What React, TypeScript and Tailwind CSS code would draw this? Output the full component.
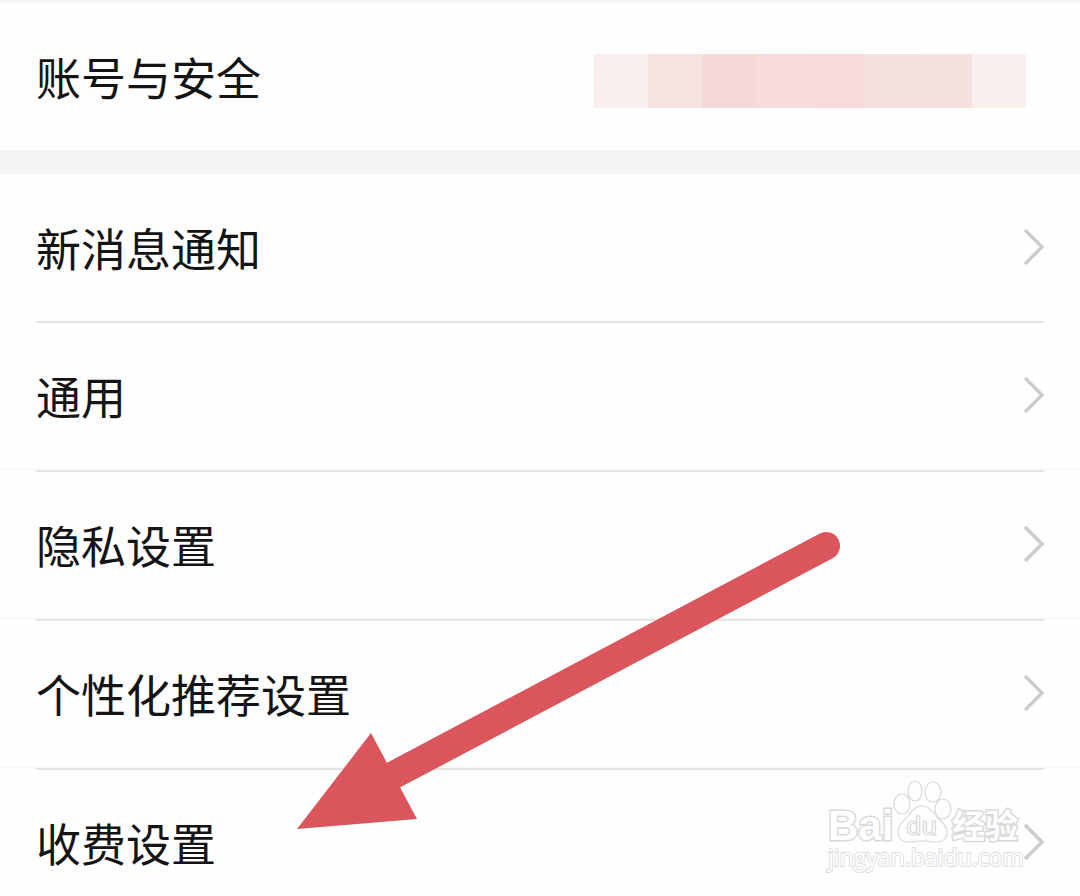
interface SettingItem {
  id: string
  label: string
}

const items: SettingItem[] = [
  { id: 'notify', label: '新消息通知' },
  { id: 'general', label: '通用' },
  { id: 'privacy', label: '隐私设置' },
  { id: 'recommend', label: '个性化推荐设置' },
  { id: 'billing', label: '收费设置' },
]

const maskCells = [
  'bg-[#faeeee]',
  'bg-[#f6e2e1]',
  'bg-[#f4d9d7]',
  'bg-[#f8dcdd]',
  'bg-[#f7dbdc]',
  'bg-[#f4e0df]',
  'bg-[#f5e1e0]',
  'bg-[#f9efec]',
]

function Chevron() {
  return (
    <svg className="h-10 w-[22px] shrink-0" viewBox="0 0 22 40" fill="none" aria-hidden="true">
      <path d="M3 2 L20 19 L3 36" stroke="#cccccc" strokeWidth="3.5" />
    </svg>
  )
}

function Arrow() {
  return (
    <svg
      className="pointer-events-none absolute top-[530px] left-[296px] h-[300px] w-[546px]"
      viewBox="296 530 546 300"
      aria-hidden="true"
    >
      <path d="M826 546 L390 777" stroke="#da565c" strokeWidth="28" strokeLinecap="round" />
      <path d="M297 829 L371 733 L417 819 Z" fill="#da565c" />
    </svg>
  )
}

function Watermark() {
  return (
    <svg
      className="pointer-events-none absolute top-[776px] right-[54px] h-[100px] w-[204px]"
      viewBox="822 776 204 100"
      fill="#fefefe"
      stroke="#d9d9d9"
      strokeWidth="1.2"
    >
      <text
        x="828"
        y="840"
        strokeWidth="3"
        className="font-['Liberation_Sans',sans-serif] text-[42px] font-bold [paint-order:stroke]"
      >
        Bai
      </text>
      <ellipse cx="902" cy="804" rx="8" ry="10" />
      <ellipse cx="915" cy="791" rx="7" ry="10" />
      <ellipse cx="933" cy="792" rx="8" ry="10" />
      <ellipse cx="943" cy="809" rx="8" ry="10" />
      <path d="M922 806 C928 806 932 810 935 815 C939 820 947 824 947 832 C947 839 942 842 936 842 C930 842 927 841 922 841 C917 841 914 842 908 842 C902 842 898 838 898 831 C898 824 905 820 909 815 C912 810 916 806 922 806 Z" />
      <text x="906" y="835" className="font-['Open_Sans',sans-serif] text-[25px] font-semibold">
        du
      </text>
      <text
        x="952"
        y="838"
        strokeWidth="3"
        className="font-['Noto_Sans_CJK_SC',sans-serif] text-[33px] font-bold [paint-order:stroke]"
      >
        经验
      </text>
      <text
        x="828"
        y="866"
        strokeWidth="2"
        stroke="#dedede"
        className="font-['Open_Sans',sans-serif] text-[23px] [paint-order:stroke]"
      >
        jingyan.baidu.com
      </text>
    </svg>
  )
}

export default function App() {
  return (
    <div className="relative h-screen overflow-hidden bg-[#fefefe] font-['Noto_Sans_CJK_SC',sans-serif] text-[45px] leading-[54px] text-[#141414]">
      {/* Account */}
      <section className="border-t-[3px] border-b-24 border-[#f4f4f4]">
        <button className="flex h-[147px] w-full items-center justify-between pr-[54px] pl-9 text-left">
          <span>账号与安全</span>
          <span className="mt-2 flex w-[432px]" aria-hidden="true">
            {maskCells.map((c) => (
              <span key={c} className={`h-[54px] flex-1 ${c}`} />
            ))}
          </span>
        </button>
      </section>

      {/* Settings list */}
      <ul>
        {items.map((item, i) => (
          <li key={item.id}>
            {i > 0 && <div className="mx-9 h-0.5 bg-[#e4e4e4]" />}
            <button
              className={`flex w-full items-center justify-between px-9 text-left ${
                i === 0 ? 'h-[147px]' : 'h-[145px]'
              }`}
            >
              <span>{item.label}</span>
              <Chevron />
            </button>
            {/* hairline across the full width */}
            {i > 0 && <div className="h-0.5 bg-[#f8f8f8]" />}
          </li>
        ))}
      </ul>

      <Arrow />
      <Watermark />
    </div>
  )
}
